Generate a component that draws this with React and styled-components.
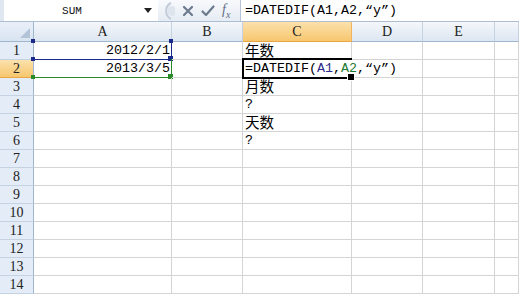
import React from 'react'
import styled, { createGlobalStyle } from 'styled-components'

const GlobalStyle = createGlobalStyle`
  html, body { margin: 0; padding: 0; background: #fff; overflow: hidden; }
  body { font-family: "Liberation Sans", sans-serif; }
  * { box-sizing: border-box; }
`

const Window = styled.div`
  width: 519px;
  height: 294px;
  overflow: hidden;
  display: flex;
  flex-direction: column;
  background: #fff;
`

const FormulaBar = styled.div`
  height: 22px;
  display: flex;
  border-bottom: 1px solid #aebdd0;
  background: linear-gradient(#f7f9fc, #e6ecf4);
`

const NameBox = styled.div`
  width: 158px;
  flex-shrink: 0;
  display: flex;
  align-items: center;
  background: #fff;
  border-left: 4px solid #dfe7f1;
  padding-right: 6px;
  font-family: "Liberation Mono", monospace;
  font-size: 11px;
  color: #111;
`

const NameText = styled.span`
  flex: 1;
  text-align: center;
  padding-right: 4px;
`

const Controls = styled.div`
  width: 82px;
  flex-shrink: 0;
  display: flex;
  align-items: center;
  gap: 7px;
  padding-left: 1px;
`

const FxLabel = styled.span`
  font-family: "Liberation Serif", serif;
  font-style: italic;
  font-size: 14px;
  color: #5f6f86;
  sub { font-size: 10px; }
`

const FormulaInput = styled.div`
  flex: 1;
  display: flex;
  align-items: center;
  padding-left: 4px;
  background: #fff;
  border-left: 1px solid #b6c4d6;
`

const Mono = styled.span`
  font-family: "Liberation Mono", "Noto Sans CJK SC", monospace;
  font-size: 13.33px;
  color: ${p => p.$color || '#000'};
  white-space: nowrap;
`

const Cjk = styled.span`
  font-family: "Noto Sans CJK SC", sans-serif;
  font-size: 14.5px;
  line-height: 17px;
  color: #000;
`

const Sheet = styled.div`
  display: grid;
  grid-template-columns: 34px 138px 71px 109px 71px 72px 1fr;
  grid-template-rows: 20px repeat(14, 18px);
`

const Corner = styled.div`
  position: relative;
  background: linear-gradient(#e9eff8, #d9e4f2);
  border-right: 1px solid #9eb6ce;
  border-bottom: 1px solid #9eb6ce;
  &::after {
    content: '';
    position: absolute;
    right: 3px;
    bottom: 3px;
    border-left: 10px solid transparent;
    border-bottom: 10px solid #b4c4d8;
  }
`

const ColHeader = styled.div`
  display: flex;
  align-items: center;
  justify-content: center;
  font-family: "Liberation Serif", serif;
  font-size: 14px;
  color: #222;
  background: ${p => p.$active
    ? 'linear-gradient(#fbe1ac, #f7c76f)'
    : 'linear-gradient(#f4f7fb, #dde6f1)'};
  border-right: 1px solid ${p => p.$active ? '#f2b35a' : '#c5d2e2'};
  border-bottom: 1px solid ${p => p.$active ? '#e9a642' : '#9eb6ce'};
`

const RowHeader = styled.div`
  display: flex;
  align-items: center;
  justify-content: center;
  font-family: "Liberation Serif", serif;
  font-size: 14px;
  color: #222;
  background: ${p => p.$active
    ? 'linear-gradient(#fbe1ac, #f7c76f)'
    : '#e4ecf7'};
  border-right: 1px solid #9eb6ce;
  border-bottom: 1px solid ${p => p.$active ? '#e9a642' : '#c5d2e2'};
`

const Cell = styled.div`
  position: relative;
  display: flex;
  align-items: flex-end;
  justify-content: ${p => p.$align === 'right' ? 'flex-end' : 'flex-start'};
  padding: 0 1px 0 2px;
  border-right: 1px solid ${p => p.$noRight ? 'transparent' : '#d4d4d4'};
  border-bottom: 1px solid #d4d4d4;
  line-height: 17px;
  overflow: visible;
  white-space: nowrap;
  z-index: ${p => p.$top ? 2 : 0};
`

const RefFrame = styled.div`
  position: absolute;
  top: -1px;
  left: -1px;
  right: -1px;
  bottom: -1px;
  border-right: 1px solid ${p => p.$color};
  border-bottom: 1px solid ${p => p.$color};
  pointer-events: none;
`

const Handle = styled.span`
  position: absolute;
  width: ${p => p.$size || 4}px;
  height: ${p => p.$size || 4}px;
  background: ${p => p.$color};
  ${p => p.$y}: -2px;
  ${p => p.$x}: -2px;
`

const ActiveFrame = styled.div`
  position: absolute;
  top: -2px;
  left: -1px;
  right: -1px;
  bottom: -2px;
  border-top: 2px solid #000;
  border-left: 2px solid #000;
  border-bottom: 2px solid #000;
  pointer-events: none;
  &::after {
    content: '';
    position: absolute;
    right: -3px;
    bottom: -4px;
    width: 6px;
    height: 6px;
    background: #000;
    border: 1px solid #fff;
  }
`

const Text = styled.span`
  position: relative;
  z-index: 3;
`

// the last column is only partly in view, its letter falls outside the window
const cols = ['A', 'B', 'C', 'D', 'E', '']

function Formula({ colored }) {
  return (
    <Mono>
      {'=DATEDIF('}
      <Mono $color={colored ? '#2c2c8c' : undefined}>A1</Mono>
      {','}
      <Mono $color={colored ? '#1f7a2e' : undefined}>A2</Mono>
      {',“y”)'}
    </Mono>
  )
}

const data = {
  '1A': { text: '2012/2/1', align: 'right', kind: 'mono' },
  '2A': { text: '2013/3/5', align: 'right', kind: 'mono' },
  '1C': { text: '年数', kind: 'cjk' },
  '2C': { kind: 'formula' },
  '3C': { text: '月数', kind: 'cjk' },
  '4C': { text: '?', kind: 'mono' },
  '5C': { text: '天数', kind: 'cjk' },
  '6C': { text: '?', kind: 'mono' },
}

function CellContent({ item }) {
  if (!item) return null
  if (item.kind === 'formula') return <Text><Formula colored /></Text>
  if (item.kind === 'cjk') return <Text><Cjk>{item.text}</Cjk></Text>
  return <Text><Mono>{item.text}</Mono></Text>
}

function ToolButtons() {
  return (
    <Controls>
      <svg width="16" height="20" viewBox="0 0 16 20">
        <path d="M12 2 A9 9 0 0 0 12 18" fill="none" stroke="#c3ccd8" strokeWidth="2" />
        <circle cx="13" cy="10" r="5" fill="#dfe5ee" />
      </svg>
      <svg width="12" height="12" viewBox="0 0 12 12">
        <path d="M2 2 L10 10 M10 2 L2 10" stroke="#6c7a8e" strokeWidth="2.2" strokeLinecap="round" />
      </svg>
      <svg width="14" height="12" viewBox="0 0 14 12">
        <path d="M1.5 6.5 L5 10 L12.5 1.5" fill="none" stroke="#6c7a8e" strokeWidth="2.2" strokeLinecap="round" strokeLinejoin="round" />
      </svg>
      <FxLabel>f<sub>x</sub></FxLabel>
    </Controls>
  )
}

export default function App() {
  const rows = Array.from({ length: 14 }, (_, i) => i + 1)
  return (
    <Window>
      <GlobalStyle />
      <FormulaBar>
        <NameBox>
          <NameText>SUM</NameText>
          <svg width="8" height="5" viewBox="0 0 8 5">
            <path d="M0 0 H8 L4 5 Z" fill="#222" />
          </svg>
        </NameBox>
        <ToolButtons />
        <FormulaInput>
          <Formula />
        </FormulaInput>
      </FormulaBar>
      <Sheet>
        <Corner />
        {cols.map((c, i) => (
          <ColHeader key={i} $active={c === 'C'}>{c}</ColHeader>
        ))}
        {rows.map(r => (
          <React.Fragment key={r}>
            <RowHeader $active={r === 2}>{r}</RowHeader>
            {cols.map((c, i) => {
              const id = `${r}${c || i}`
              const item = data[id]
              const active = id === '2C'
              return (
                <Cell key={id} $align={item && item.align} $noRight={active} $top={active}>
                  {id === '1A' && (
                    <RefFrame $color="#1c2a8c">
                      <Handle $color="#1c2a8c" $y="top" $x="left" />
                      <Handle $color="#1c2a8c" $y="top" $x="right" />
                      <Handle $color="#1c2a8c" $y="bottom" $x="left" />
                      <Handle $color="#1c2a8c" $y="bottom" $x="right" $size={5} />
                    </RefFrame>
                  )}
                  {id === '2A' && (
                    <RefFrame $color="#2a8a2a">
                      <Handle $color="#2a8a2a" $y="bottom" $x="left" />
                      <Handle $color="#2a8a2a" $y="bottom" $x="right" $size={5} />
                    </RefFrame>
                  )}
                  {active && <ActiveFrame />}
                  <CellContent item={item} />
                </Cell>
              )
            })}
          </React.Fragment>
        ))}
      </Sheet>
    </Window>
  )
}
